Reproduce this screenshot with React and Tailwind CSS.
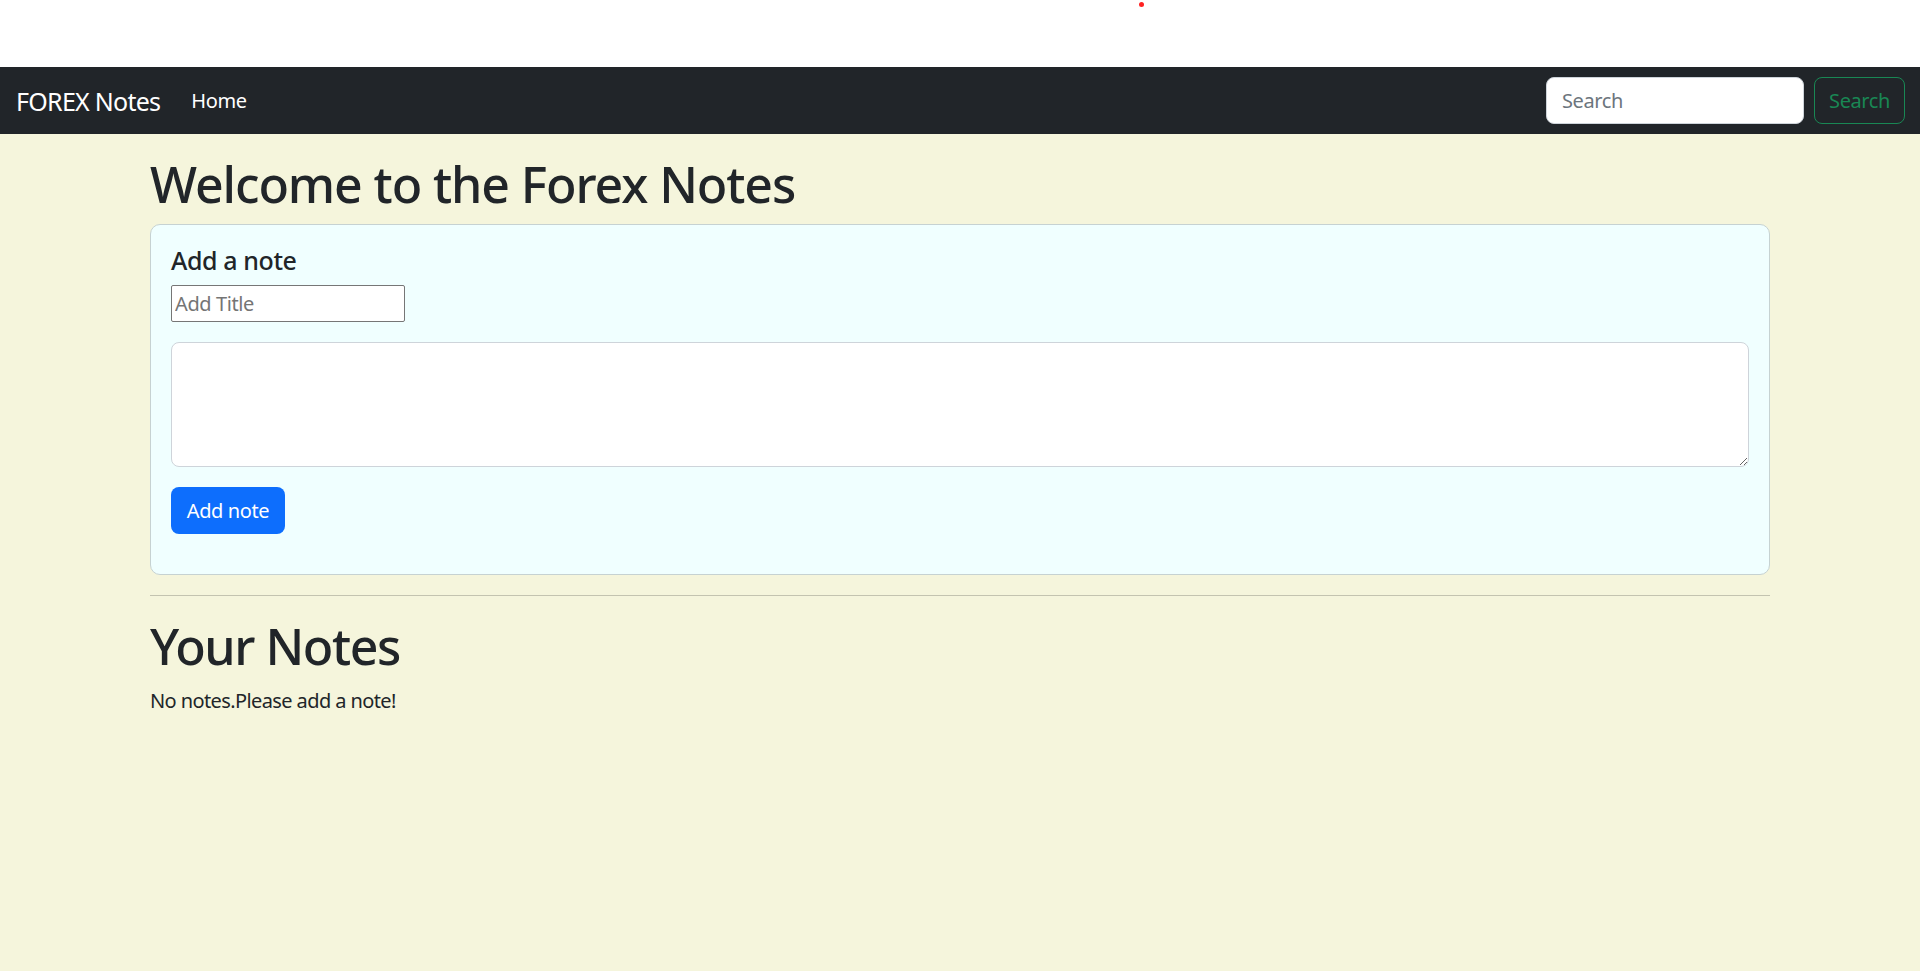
export default function App() {
  const font = { fontFamily: '"Noto Sans", "Open Sans", Arial, sans-serif' };
  return (
    <div className="min-h-[971px] bg-[#f5f5dc] tracking-[-0.025em] text-[#212529]" style={font}>
      <div className="relative h-[67px] bg-white">
        <span className="absolute left-[1139px] top-[2px] h-[5px] w-[5px] rounded-full bg-[#f22]"></span>
      </div>
      <nav className="flex h-[67px] items-center bg-[#212529] pl-[16px] pr-[15px]">
        <a className="text-[25px] leading-[30px] tracking-[-0.029em] text-white">FOREX Notes</a>
        <a className="ml-[31px] text-[20px] leading-[30px] text-white">Home</a>
        <div className="ml-auto flex items-center gap-[10px]">
          <input
            placeholder="Search"
            className="h-[47px] w-[258px] rounded-[8px] border border-[#ced4da] bg-white px-[15px] text-[20px] text-[#212529] placeholder:text-[#6c757d] outline-none"
          />
          <button className="h-[47px] w-[91px] rounded-[8px] border border-[#198754] text-[20px] text-[#198754]">
            Search
          </button>
        </div>
      </nav>
      <div className="mx-auto w-[1650px] px-[15px] pt-[20px]">
        <h1 className="mb-[10px] text-[50px] font-medium leading-[60px] tracking-[-0.022em]">Welcome to the Forex Notes</h1>
        <div className="rounded-[10px] border border-[#c6d2d2] bg-[#f0ffff] px-[20px] pt-[20px] pb-[40px]">
          <h5 className="mb-[10px] text-[25px] font-medium leading-[30px]">Add a note</h5>
          <input
            placeholder="Add Title"
            className="mt-[10px] block h-[37px] w-[234px] rounded-[2px] border border-[#767676] bg-white px-[3px] text-[20px] placeholder:text-[#757575] outline-none"
          />
          <textarea className="mt-[20px] block h-[125px] w-full rounded-[8px] border border-[#ced4da] bg-white outline-none"></textarea>
          <button className="mt-[20px] h-[47px] w-[114px] rounded-[8px] bg-[#0d6efd] text-[20px] text-white">Add note</button>
        </div>
        <hr className="my-[20px] border-t border-[#c3c3b0]" />
        <h1 className="mb-[10px] mt-[2px] text-[50px] font-medium leading-[60px] tracking-[-0.029em]">Your Notes</h1>
        <p className="text-[20px] leading-[30px] tracking-[-0.03em]">No notes.Please add a note!</p>
      </div>
    </div>
  );
}
